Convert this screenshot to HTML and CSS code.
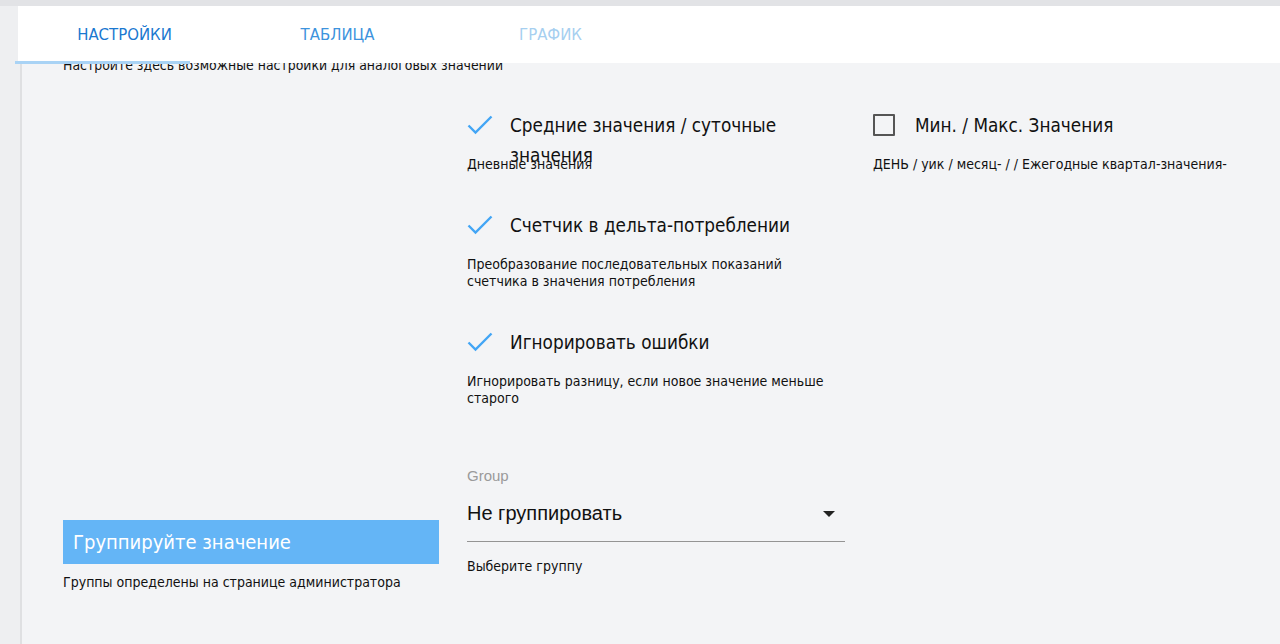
FILE: index.html
```html
<!DOCTYPE html>
<html lang="ru">
<head>
    <meta charset="UTF-8">
    <title>Настройки</title>
    <link rel="stylesheet" href="styles.css">
</head>
<body>
    <div class="page">
        <div class="side"></div>
        <div class="main">
            <div class="tabs">
                <div class="tab active">НАСТРОЙКИ</div>
                <div class="tab">ТАБЛИЦА</div>
                <div class="tab disabled">ГРАФИК</div>
                <div class="tab-indicator"></div>
            </div>

            <div class="content">
                <p class="intro">Настройте здесь возможные настройки для аналоговых значений</p>

                <div class="grid">
                    <div class="col col-group">
                        <div class="group-title">Группируйте значение</div>
                        <div class="hint">Группы определены на странице администратора</div>
                    </div>

                    <div class="col">
                        <div class="option">
                            <div class="option-row">
                                <svg class="check" width="26" height="20" viewBox="0 0 26 20"><path d="M1.5 10.5 L8.5 17.5 L24.5 1.5" fill="none" stroke="#42a5f5" stroke-width="2.4"/></svg>
                                <span class="option-label">Средние значения / суточные значения</span>
                            </div>
                            <div class="hint">Дневные значения</div>
                        </div>
                        <div class="option">
                            <div class="option-row">
                                <svg class="check" width="26" height="20" viewBox="0 0 26 20"><path d="M1.5 10.5 L8.5 17.5 L24.5 1.5" fill="none" stroke="#42a5f5" stroke-width="2.4"/></svg>
                                <span class="option-label">Счетчик в дельта-потреблении</span>
                            </div>
                            <div class="hint">Преобразование последовательных показаний счетчика в значения потребления</div>
                        </div>
                        <div class="option">
                            <div class="option-row">
                                <svg class="check" width="26" height="20" viewBox="0 0 26 20"><path d="M1.5 10.5 L8.5 17.5 L24.5 1.5" fill="none" stroke="#42a5f5" stroke-width="2.4"/></svg>
                                <span class="option-label">Игнорировать ошибки</span>
                            </div>
                            <div class="hint">Игнорировать разницу, если новое значение меньше старого</div>
                        </div>

                        <div class="select-field">
                            <div class="select-label">Group</div>
                            <div class="select-value">
                                <span>Не группировать</span>
                                <span class="arrow"></span>
                            </div>
                            <div class="hint">Выберите группу</div>
                        </div>
                    </div>

                    <div class="col">
                        <div class="option">
                            <div class="option-row">
                                <span class="box"></span>
                                <span class="option-label">Мин. / Макс. Значения</span>
                            </div>
                            <div class="hint">ДЕНЬ / уик / месяц- / / Ежегодные квартал-значения-</div>
                        </div>
                    </div>
                </div>
            </div>
        </div>
    </div>
</body>
</html>
```

FILE: styles.css
```css
* {
    box-sizing: border-box;
}
html, body {
    margin: 0;
    height: 100%;
}
body {
    background-color: #f3f4f6;
    font-family: "DejaVu Sans Condensed", "DejaVu Sans", sans-serif;
    color: #111;
    border-top: 6px solid #e2e3e6;
    overflow: hidden;
}
.page {
    display: flex;
    height: 100%;
}
.side {
    width: 22px;
    flex: 0 0 22px;
    background-color: #eeeff1;
    border-right: 2px solid #dfe0e2;
}
.main {
    flex: 1;
    position: relative;
}
.tabs {
    position: absolute;
    top: 0;
    left: -4px;
    right: 0;
    height: 57px;
    background-color: #fff;
    display: flex;
    z-index: 2;
}
.tab {
    width: 213px;
    text-align: center;
    font-size: 16.6px;
    line-height: 58px;
    color: #3d93dd;
}
.tab.active {
    color: #1a78d0;
}
.tab.disabled {
    color: #a6cff0;
}
.tab-indicator {
    position: absolute;
    left: -3px;
    bottom: -1px;
    width: 175px;
    height: 3px;
    background-color: #a9d3f5;
}
.content {
    padding: 51px 0 0 41px;
}
.intro {
    margin: 0;
    font-size: 13.9px;
    line-height: 17px;
}
.grid {
    display: grid;
    grid-template-columns: 376px 378px 378px;
    column-gap: 28px;
    margin-top: 38px;
}
.col-group {
    padding-top: 408px;
}
.group-title {
    background-color: #64b5f6;
    color: #fff;
    font-size: 20px;
    height: 44px;
    line-height: 44px;
    padding-left: 10px;
}
.col-group .hint {
    margin-top: 10px;
}
.hint {
    font-size: 14px;
    line-height: 17px;
}
.option {
    margin-bottom: 39px;
}
.option-row {
    display: flex;
    align-items: flex-start;
    height: 44px;
}
.check {
    margin: 3px 17px 0 0;
    flex: 0 0 auto;
}
.box {
    width: 22px;
    height: 22px;
    border: 2.5px solid #555;
    border-radius: 1px;
    margin: 2px 20px 0 0;
    flex: 0 0 auto;
}
.option-label {
    font-size: 18.8px;
    line-height: 30px;
    margin-top: -1px;
    max-width: 300px;
}
.select-field {
    padding-top: 21px;
    font-family: "Liberation Sans", Arial, sans-serif;
}
.select-label {
    font-size: 15px;
    color: #9a9a9a;
    line-height: 18px;
}
.select-value {
    display: flex;
    justify-content: space-between;
    align-items: center;
    font-size: 20px;
    height: 57px;
    padding-top: 1px;
    border-bottom: 1px solid #949494;
    padding-right: 10px;
}
.arrow {
    width: 0;
    height: 0;
    border-left: 6px solid transparent;
    border-right: 6px solid transparent;
    border-top: 6px solid #222;
}
.select-field .hint {
    font-family: "DejaVu Sans Condensed", "DejaVu Sans", sans-serif;
    margin-top: 16px;
}
```
